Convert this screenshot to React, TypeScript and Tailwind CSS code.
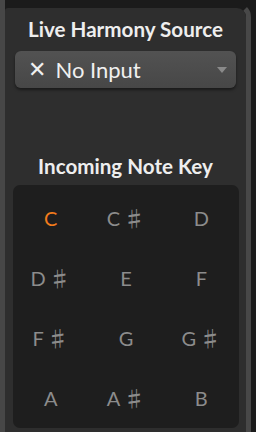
import React from "react";

const notes = ["C", "C♯", "D", "D♯", "E", "F", "F♯", "G", "G♯", "A", "A♯", "B"];

function Note({ n, active }: { n: string; active?: boolean }) {
  const base = n[0];
  const sharp = n.length > 1;
  return (
    <div className="flex items-center justify-center h-[60px]">
      <span
        className={
          "flex items-center text-[20px] leading-none " + (active ? "text-[#f27b1c]" : "text-[#8c8c8c]")
        }
        style={{ fontFamily: "Lato, 'DejaVu Sans', sans-serif" }}
      >
        {base}
        {sharp && (
          <span
            className="ml-[3px] text-[22px] leading-none -mt-[2px] font-medium"
            style={{ fontFamily: "'Noto Sans CJK JP', 'DejaVu Sans', sans-serif" }}
          >
            ♯
          </span>
        )}
      </span>
    </div>
  );
}

export default function App() {
  return (
    <div
      className="w-[256px] h-[432px] bg-[#1b1b1b] flex overflow-hidden"
      style={{ fontFamily: "Lato, 'Open Sans', sans-serif" }}
    >
      <div className="w-[5px] bg-[#474747] shrink-0" />
      <div className="w-[246px] pt-[3px] flex flex-col shrink-0">
        <div className="flex-1 flex flex-col border-r-[5px] border-r-[#484848] border-t-[5px] border-t-transparent rounded-tr-[14px] bg-clip-padding">
          <div className="flex-1 flex flex-col bg-[#2e2e2e] rounded-tl-[3px] rounded-tr-[9px]">
            <div className="pt-[9px] text-center text-[20.6px] leading-[24px] font-bold text-[#eeeeee]">
              Live Harmony Source
            </div>
            <div className="mt-[10px] mx-[10px] h-[37px] rounded-[6px] bg-gradient-to-b from-[#525252] to-[#474747] shadow-[0_2px_3px_rgba(0,0,0,0.45)] flex items-center pl-[13px] pr-[8px]">
              <span className="text-[22px] leading-none text-[#f0f0f0]" style={{ fontFamily: "'DejaVu Sans', sans-serif" }}>
                ✕
              </span>
              <span className="ml-[9px] text-[22px] leading-none text-[#f0f0f0]">No Input</span>
              <svg className="ml-auto mr-[1px]" width="10" height="6" viewBox="0 0 10 6">
                <path d="M0 0 L10 0 L5 6 Z" fill="#8a8a8a" />
              </svg>
            </div>
            <div className="mt-[66px] text-center text-[20.6px] leading-[24px] font-bold text-[#eeeeee]">
              Incoming Note Key
            </div>
            <div className="mt-[7px] ml-[8px] w-[226px] flex-1 mb-[5px] bg-[#1e1e1e] rounded-[7px] pt-[3px] grid grid-cols-3 content-start">
              {notes.map((n, i) => (
                <Note key={n} n={n} active={i === 0} />
              ))}
            </div>
          </div>
        </div>
      </div>
    </div>
  );
}
